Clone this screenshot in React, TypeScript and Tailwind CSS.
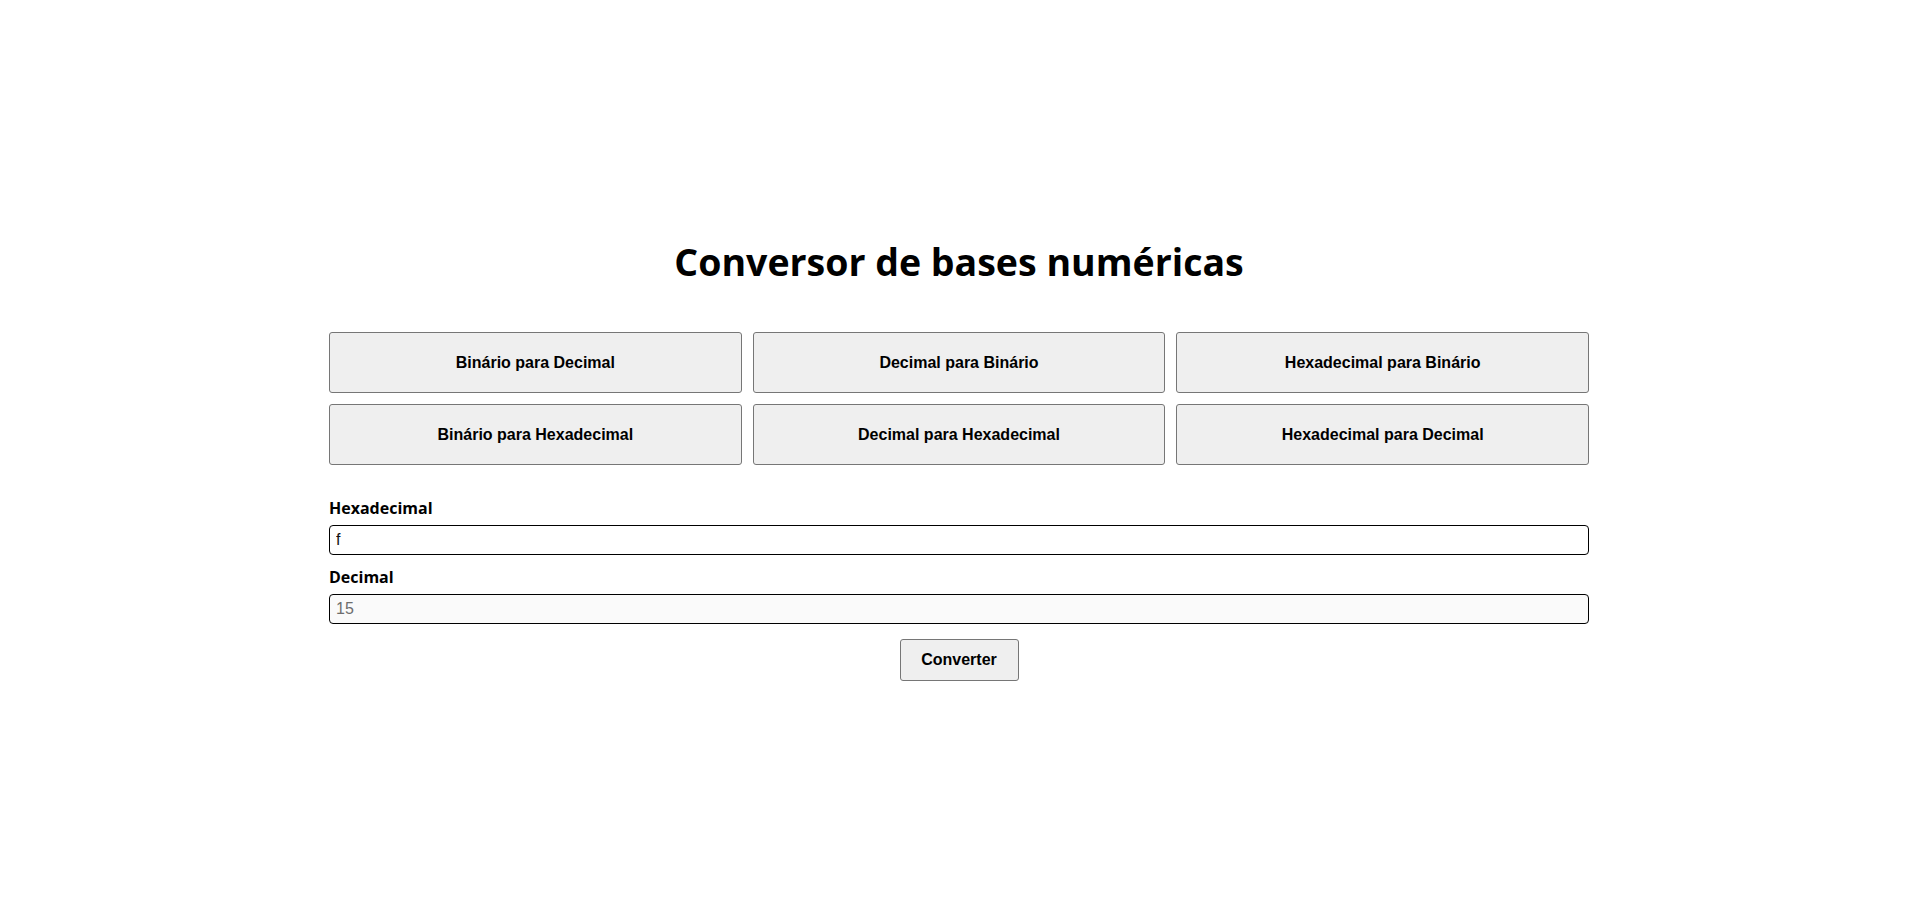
import { useState } from "react";

const conversions = [
	"Binário para Decimal",
	"Decimal para Binário",
	"Hexadecimal para Binário",
	"Binário para Hexadecimal",
	"Decimal para Hexadecimal",
	"Hexadecimal para Decimal",
];

export default function App() {
	const [hex, setHex] = useState("f");
	const [dec, setDec] = useState("15");

	const convert = () => {
		const n = parseInt(hex, 16);
		setDec(isNaN(n) ? "" : String(n));
	};

	return (
		<div className="min-h-screen bg-white flex items-center justify-center pt-[3px] font-['Open_Sans',sans-serif] text-black">
			<div className="w-[1260px]">
				<h1 className="text-center text-[37.5px] leading-[48px] font-bold">
					Conversor de bases numéricas
				</h1>

				<div className="grid grid-cols-3 gap-[11px] mt-[46px]">
					{conversions.map((c) => (
						<button
							key={c}
							className="h-[61px] bg-[#efefef] border border-[#767676] rounded-[3px] font-['Liberation_Sans',Arial,sans-serif] font-bold text-[16px]"
						>
							{c}
						</button>
					))}
				</div>

				<div className="mt-[33px]">
					<label className="block text-[16px] leading-[20px] font-bold mb-[7px]">
						Hexadecimal
					</label>
					<input
						className="block w-full h-[30px] border border-black rounded-[4px] px-[6px] bg-white font-['Liberation_Sans',Arial,sans-serif] text-[16px] text-[#111] outline-none"
						value={hex}
						onChange={(e) => setHex(e.target.value)}
					/>
				</div>

				<div className="mt-[12px]">
					<label className="block text-[16px] leading-[20px] font-bold mb-[7px]">
						Decimal
					</label>
					<input
						className="block w-full h-[30px] border border-black rounded-[4px] px-[6px] bg-[#fafafa] font-['Liberation_Sans',Arial,sans-serif] text-[16px] text-[#6d6d6d] outline-none"
						value={dec}
						readOnly
					/>
				</div>

				<div className="flex justify-center mt-[15px]">
					<button
						onClick={convert}
						className="h-[42px] w-[119px] bg-[#efefef] border border-[#767676] rounded-[3px] font-['Liberation_Sans',Arial,sans-serif] font-bold text-[16px]"
					>
						Converter
					</button>
				</div>
			</div>
		</div>
	);
}
